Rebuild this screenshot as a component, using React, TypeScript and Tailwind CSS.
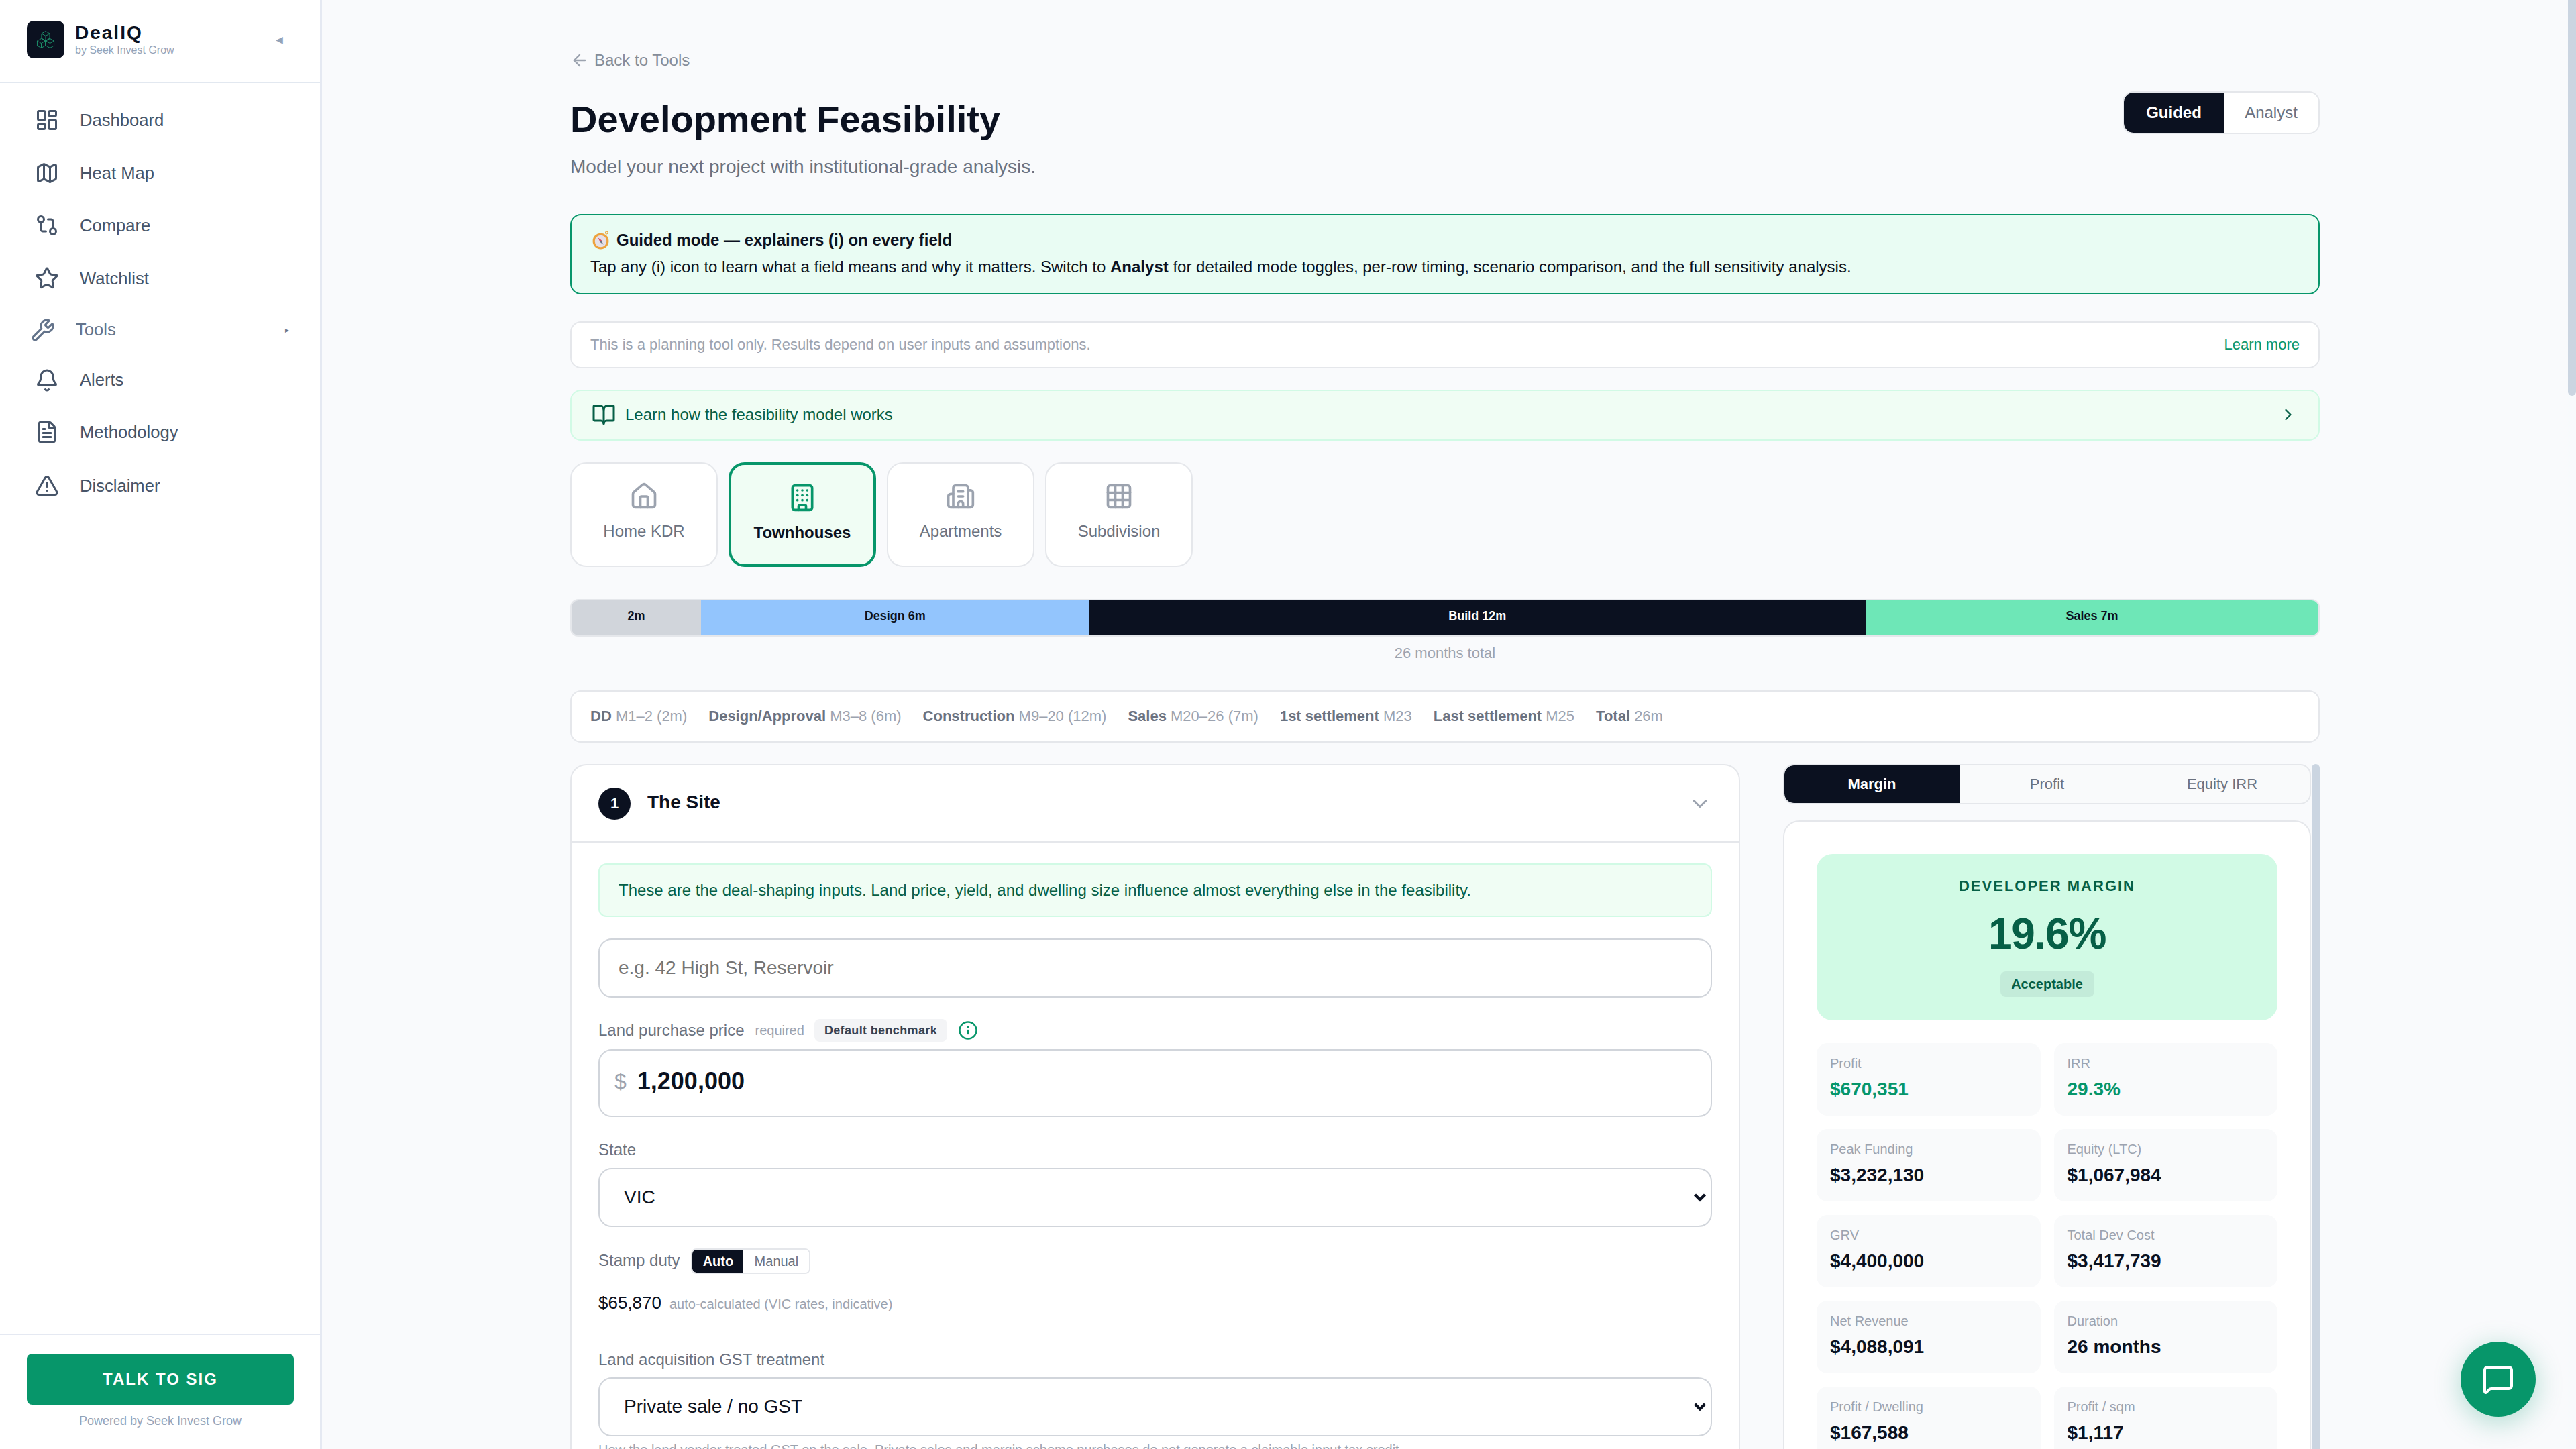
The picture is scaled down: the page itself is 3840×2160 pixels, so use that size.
import React from "react";
import {
  LayoutDashboard, Map as MapIcon, GitCompare, Star, Wrench, Bell, FileText, TriangleAlert,
  ArrowLeft, BookOpen, ChevronRight, ChevronDown, House, Building, Building2, Grid3x3, Info, MessageSquare,
} from "lucide-react";

const navTop = [
  { label: "Dashboard", icon: LayoutDashboard },
  { label: "Heat Map", icon: MapIcon },
  { label: "Compare", icon: GitCompare },
  { label: "Watchlist", icon: Star },
];

function NavRow({ label, icon: Icon, h }: { label: string; icon: any; h: string }) {
  return (
    <div className={`flex items-center pl-[52px] gap-[31px] text-[25.6px] text-[#475569] ${h}`}>
      <Icon size={36} strokeWidth={2} className="shrink-0" />
      <span>{label}</span>
    </div>
  );
}

function Logo() {
  const cube = (cx: number, cy: number) => {
    const r = 7;
    const d = 6.06;
    return (
      <g key={`${cx}-${cy}`}>
        <polygon points={`${cx},${cy - r} ${cx + d},${cy - r / 2} ${cx + d},${cy + r / 2} ${cx},${cy + r} ${cx - d},${cy + r / 2} ${cx - d},${cy - r / 2}`} />
        <polyline points={`${cx - d},${cy - r / 2} ${cx},${cy} ${cx + d},${cy - r / 2}`} />
        <line x1={cx} y1={cy} x2={cx} y2={cy + r} />
      </g>
    );
  };
  return (
    <div className="flex h-[56px] w-[56px] shrink-0 items-center justify-center rounded-[10px] bg-[#0b1120]">
      <svg width="28" height="26" viewBox="0 0 28 26" fill="none" stroke="#1f9d72" strokeWidth="0.9">
        {cube(14, 7.5)}
        {cube(7.5, 18.5)}
        {cube(20.5, 18.5)}
      </svg>
    </div>
  );
}

function Compass() {
  return (
    <svg width="25" height="28" viewBox="0 0 24 27" className="shrink-0">
      <circle cx="20.5" cy="3" r="1.8" fill="none" stroke="#e9a23b" strokeWidth="1" />
      <circle cx="12" cy="15" r="11.5" fill="#eda33f" />
      <circle cx="12" cy="15" r="8.5" fill="#e6e0e8" />
      <polygon points="8,10 13.5,14 11,16" fill="#d9475f" />
      <polygon points="16,20 10.5,16 13,14" fill="#6b7280" />
    </svg>
  );
}

function Sidebar() {
  return (
    <aside className="flex h-full w-[480px] shrink-0 flex-col border-r-[3px] border-[#e5e9f2] bg-white">
      <div className="flex h-[124px] shrink-0 items-center border-b-[2px] border-[#e2e8f0] pb-[4px] pl-[40px] pr-[55px]">
        <Logo />
        <div className="ml-[16px] flex-1">
          <div className="text-[28px] font-bold leading-[30px] tracking-[2px] text-[#0b1120]">DealIQ</div>
          <div className="mt-[1px] text-[16px] leading-[20px] text-[#94a3b8]">by Seek Invest Grow</div>
        </div>
        <span className="text-[14px] leading-none text-[#94a3b8]">◀</span>
      </div>
      <nav className="flex-1 pt-[16px]">
        {navTop.map((n) => (
          <NavRow key={n.label} label={n.label} icon={n.icon} h="h-[78.5px]" />
        ))}
        <div className="flex h-[75px] items-center gap-[31px] pl-[46px] pr-[46px] text-[25.6px] text-[#64748b]">
          <Wrench size={36} strokeWidth={2} className="shrink-0" />
          <span className="flex-1">Tools</span>
          <span className="text-[12px] leading-none">▸</span>
        </div>
        <NavRow label="Alerts" icon={Bell} h="h-[75px]" />
        <NavRow label="Methodology" icon={FileText} h="h-[80px]" />
        <NavRow label="Disclaimer" icon={TriangleAlert} h="h-[80px]" />
      </nav>
      <div className="flex h-[172px] shrink-0 flex-col items-center border-t-[2px] border-[#e5e9f2] pl-[40px] pr-[39px] pt-[28px]">
        <button className="h-[76px] w-full rounded-[8px] bg-[#07966a] text-[24px] font-bold tracking-[2px] text-white">TALK TO SIG</button>
        <div className="mt-[12px] text-[18px] leading-[24px] text-[#94a3b8]">Powered by Seek Invest Grow</div>
      </div>
    </aside>
  );
}

const types = [
  { label: "Home KDR", icon: House },
  { label: "Townhouses", icon: Building, active: true },
  { label: "Apartments", icon: Building2 },
  { label: "Subdivision", icon: Grid3x3 },
];

function TypeCard({ label, icon: Icon, active }: { label: string; icon: any; active?: boolean }) {
  return (
    <div
      className={
        active
          ? "flex h-[156px] w-[220px] flex-col items-center rounded-[24px] border-[4px] border-[#07966a] bg-[#f0fdf4] pt-[27px]"
          : "flex h-[156px] w-[220px] flex-col items-center rounded-[24px] border-[2px] border-[#e5e7eb] bg-white pt-[27px]"
      }
    >
      <Icon size={44} strokeWidth={2} className={active ? "text-[#07966a]" : "text-[#9ca3af]"} />
      <div className={active ? "mt-[14px] text-[24px] font-bold leading-[32px] text-[#0b1120]" : "mt-[14px] text-[24px] leading-[32px] text-[#6b7280]"}>{label}</div>
    </div>
  );
}

const phases = [
  { label: "2m", grow: "grow-[2]", cls: "bg-[#d1d5db] text-[#0b1120]" },
  { label: "Design 6m", grow: "grow-[6]", cls: "bg-[#93c5fd] text-[#0b1120]" },
  { label: "Build 12m", grow: "grow-[12]", cls: "bg-[#0b1120] text-white" },
  { label: "Sales 7m", grow: "grow-[7]", cls: "bg-[#6ee7b7] text-[#0b1120]" },
];

const schedule = [
  ["DD", "M1–2 (2m)"],
  ["Design/Approval", "M3–8 (6m)"],
  ["Construction", "M9–20 (12m)"],
  ["Sales", "M20–26 (7m)"],
  ["1st settlement", "M23"],
  ["Last settlement", "M25"],
  ["Total", "26m"],
];

const stats: { label: string; value: string; green?: boolean }[] = [
  { label: "Profit", value: "$670,351", green: true },
  { label: "IRR", value: "29.3%", green: true },
  { label: "Peak Funding", value: "$3,232,130" },
  { label: "Equity (LTC)", value: "$1,067,984" },
  { label: "GRV", value: "$4,400,000" },
  { label: "Total Dev Cost", value: "$3,417,739" },
  { label: "Net Revenue", value: "$4,088,091" },
  { label: "Duration", value: "26 months" },
  { label: "Profit / Dwelling", value: "$167,588" },
  { label: "Profit / sqm", value: "$1,117" },
];

function FieldLabel({ children }: { children: React.ReactNode }) {
  return <div className="text-[24px] leading-[32px] text-[#6b7280]">{children}</div>;
}

function SelectField({ value, className }: { value: string; className: string }) {
  return (
    <div className={`relative ${className}`}>
      <select
        defaultValue={value}
        className="block h-[88px] w-full appearance-none rounded-[20px] border-[2px] border-[#d1d5db] bg-white pl-[36px] pr-[48px] text-[28px] text-[#0b1120]"
      >
        <option>{value}</option>
      </select>
      <svg width="18" height="13" viewBox="0 0 18 13" fill="none" stroke="#0b1120" strokeWidth="4.4" className="pointer-events-none absolute right-[9px] top-[38px]">
        <polyline points="1.5,2 9,9.5 16.5,2" />
      </svg>
    </div>
  );
}

function SitePanel() {
  return (
    <section className="h-[1100px] rounded-t-[24px] border-[2px] border-b-0 border-[#e5e7eb] bg-white">
      <div className="flex h-[115px] items-center border-b-[2px] border-[#e5e7eb] pl-[40px] pr-[40px]">
        <div className="flex h-[48px] w-[48px] items-center justify-center rounded-full bg-[#0b1120] text-[22px] font-bold text-white">1</div>
        <div className="ml-[25px] flex-1 pb-[4px] text-[28px] font-bold text-[#0b1120]">The Site</div>
        <ChevronDown size={36} strokeWidth={2} className="text-[#9ca3af]" />
      </div>
      <div className="px-[40px] pt-[31px]">
        <div className="flex h-[80px] items-center rounded-[12px] border-[2px] border-[#d1fae5] bg-[#f0fdf4] pl-[28px] text-[24px] text-[#065f46]">
          These are the deal-shaping inputs. Land price, yield, and dwelling size influence almost everything else in the feasibility.
        </div>
        <input
          readOnly
          placeholder="e.g. 42 High St, Reservoir"
          className="mt-[32px] block h-[88px] w-full rounded-[20px] border-[2px] border-[#d1d5db] bg-white px-[28px] text-[28px] placeholder:text-[#757575]"
        />
        <div className="mt-[32px] flex h-[34px] items-center">
          <span className="text-[24px] text-[#6b7280]">Land purchase price</span>
          <span className="ml-[16px] text-[20px] text-[#9ca3af]">required</span>
          <span className="ml-[15px] flex h-[34px] items-center rounded-[8px] bg-[#f3f4f6] px-[15px] text-[18px] font-bold tracking-[0.36px] text-[#374151]">Default benchmark</span>
          <Info size={30} strokeWidth={2} className="ml-[16px] text-[#07966a]" />
        </div>
        <div className="mt-[11px] flex h-[101px] items-center rounded-[20px] border-[2px] border-[#d1d5db] bg-white pb-[6px] pl-[22px]">
          <span className="text-[32px] text-[#9ca3af]">$</span>
          <span className="ml-[16px] text-[36px] font-bold text-[#0b1120]">1,200,000</span>
        </div>
        <div className="mt-[33px]">
          <FieldLabel>State</FieldLabel>
        </div>
        <SelectField value="VIC" className="mt-[11px]" />
        <div className="mt-[32px] flex h-[38px] items-center">
          <span className="pb-[2px] text-[24px] text-[#6b7280]">Stamp duty</span>
          <div className="ml-[17px] flex h-[38px] overflow-hidden rounded-[8px] border-[2px] border-[#e5e7eb]">
            <span className="flex w-[76px] items-center justify-center rounded-l-[6px] bg-[#0b1120] text-[20px] font-bold text-white">Auto</span>
            <span className="flex w-[98px] items-center justify-center bg-white text-[20px] text-[#6b7280]">Manual</span>
          </div>
        </div>
        <div className="mt-[24px] flex items-baseline">
          <span className="text-[26px] text-[#0b1120]">$65,870</span>
          <span className="ml-[12px] text-[20px] text-[#9ca3af]">auto-calculated (VIC rates, indicative)</span>
        </div>
        <div className="mt-[49px]">
          <FieldLabel>Land acquisition GST treatment</FieldLabel>
        </div>
        <SelectField value="Private sale / no GST" className="mt-[10px]" />
        <div className="mt-[6px] text-[20px] leading-[28px] text-[#9ca3af]">
          How the land vendor treated GST on the sale. Private sales and margin scheme purchases do not generate a claimable input tax credit.
        </div>
      </div>
    </section>
  );
}

function ResultsPanel() {
  return (
    <aside className="flex w-[800px] shrink-0 gap-[1px]">
      <div className="min-w-0 flex-1">
        <div className="flex h-[60px] overflow-hidden rounded-[16px] border-[2px] border-[#e5e7eb] bg-[#f9fafb] pb-0 text-[22px]">
          <div className="flex flex-1 items-center justify-center rounded-l-[14px] bg-[#0b1120] pb-[2px] font-bold text-white">Margin</div>
          <div className="flex flex-1 items-center justify-center pb-[2px] text-[#6b7280]">Profit</div>
          <div className="flex flex-1 items-center justify-center pb-[2px] text-[#6b7280]">Equity IRR</div>
        </div>
        <div className="mt-[24px] rounded-t-[24px] border-[2px] border-b-0 border-[#e5e7eb] bg-white px-[48px] pt-[48px]">
          <div className="flex h-[248px] flex-col items-center rounded-[24px] bg-[#d1fae5] pt-[34px]">
            <div className="text-[22px] font-bold leading-[28px] tracking-[2px] text-[#065f46]">DEVELOPER MARGIN</div>
            <div className="mt-[20px] text-[64px] font-bold leading-[74px] tracking-[-1.28px] text-[#065f46]">19.6%</div>
            <div className="mt-[19px] flex h-[38px] w-[140px] items-center justify-center rounded-[8px] bg-[#c3ebd9] text-[20px] font-bold text-[#065f46]">Acceptable</div>
          </div>
          <div className="mt-[34px] grid grid-cols-2 gap-x-[20px] gap-y-[20px]">
            {stats.map((s) => (
              <div key={s.label} className="h-[108px] rounded-[16px] bg-[#f9fafb] px-[20px] pt-[16px]">
                <div className="text-[20px] leading-[28px] text-[#9ca3af]">{s.label}</div>
                <div className={s.green ? "mt-[8px] text-[28px] font-bold leading-[34px] text-[#07966a]" : "mt-[8px] text-[28px] font-bold leading-[34px] text-[#0b1120]"}>{s.value}</div>
              </div>
            ))}
          </div>
        </div>
      </div>
      <div className="h-[1100px] w-[12px] shrink-0 rounded-t-[6px] bg-[#cbd5e1]" />
    </aside>
  );
}

function Main() {
  return (
    <div className="flex h-full min-w-0 flex-1 overflow-hidden bg-[#f9fafc]">
      <main className="h-full min-w-0 flex-1 overflow-hidden">
        <div className="mx-auto max-w-[2800px] px-[96px] pt-[72px]">
          <div className="flex h-[36px] items-center gap-[8px] text-[24px] text-[#858c98]">
            <ArrowLeft size={28} strokeWidth={2} className="text-[#9ca3af]" />
            <span>Back to Tools</span>
          </div>
          <div className="mt-[28px] flex items-start justify-between">
            <div className="pt-[8px]">
              <h1 className="text-[56px] font-bold leading-[67px] text-[#0b1120]">Development Feasibility</h1>
              <p className="mt-[17px] text-[28px] leading-[42px] text-[#6b7280]">Model your next project with institutional-grade analysis.</p>
            </div>
            <div className="flex h-[64px] overflow-hidden rounded-[16px] border-[2px] border-[#e5e7eb] bg-white text-[24px]">
              <div className="flex w-[149px] items-center justify-center rounded-l-[14px] bg-[#0b1120] font-bold text-white">Guided</div>
              <div className="flex w-[141px] items-center justify-center text-[#6b7280]">Analyst</div>
            </div>
          </div>

          <div className="mt-[49px] h-[120px] rounded-[16px] border-[2px] border-[#07966a] bg-[#e9fcf3] px-[28px] pt-[19px] text-[24px] leading-[36px] text-[#0b1120]">
            <div className="flex items-center font-bold">
              <span className="ml-[3px] mr-[11px] flex">
                <Compass />
              </span>
              <span>Guided mode — explainers (i) on every field</span>
            </div>
            <div className="mt-[4px]">
              Tap any (i) icon to learn what a field means and why it matters. Switch to <b>Analyst</b> for detailed mode toggles, per-row timing, scenario comparison, and the full sensitivity analysis.
            </div>
          </div>

          <div className="mt-[40px] flex h-[70px] items-center justify-between rounded-[16px] border-[2px] border-[#e5e7eb] bg-white px-[28px] pb-[2px] text-[22px]">
            <span className="text-[#9ca3af]">This is a planning tool only. Results depend on user inputs and assumptions.</span>
            <span className="text-[#07966a]">Learn more</span>
          </div>

          <div className="mt-[32px] flex h-[76px] items-center rounded-[16px] border-[2px] border-[#d1fae5] bg-[#f0fdf4] pb-[2px] pl-[30px] pr-[31px] text-[24px] text-[#065f46]">
            <BookOpen size={36} strokeWidth={2} className="shrink-0" />
            <span className="ml-[14px] flex-1">Learn how the feasibility model works</span>
            <ChevronRight size={28} strokeWidth={2} />
          </div>

          <div className="mt-[32px] flex gap-[16px]">
            {types.map((t) => (
              <TypeCard key={t.label} {...t} />
            ))}
          </div>

          <div className="mt-[48px] flex h-[56px] overflow-hidden rounded-[12px] border-[2px] border-[#e5e7eb]">
            {phases.map((p) => (
              <div key={p.label} className={`flex basis-0 items-center justify-center pb-[5px] text-[18px] font-bold ${p.grow} ${p.cls}`}>{p.label}</div>
            ))}
          </div>
          <div className="mt-[9px] text-center text-[22px] leading-[32px] text-[#9ca3af]">26 months total</div>

          <div className="mt-[39px] flex h-[78px] items-center gap-[32px] rounded-[16px] border-[2px] border-[#e5e7eb] bg-white px-[28px] pb-[2px] text-[22px]">
            {schedule.map(([a, b]) => (
              <span key={a}>
                <b className="text-[#6b7280]">{a}</b> <span className="text-[#9ca3af]">{b}</span>
              </span>
            ))}
          </div>

          <div className="mt-[32px] flex items-start gap-[64px]">
            <div className="min-w-0 flex-1">
              <SitePanel />
            </div>
            <ResultsPanel />
          </div>
        </div>
      </main>
      <div className="h-full w-[12px] shrink-0 bg-[#f8fafc]">
        <div className="h-[590px] rounded-b-[6px] bg-[#cbd5e1]" />
      </div>
    </div>
  );
}

export default function App() {
  return (
    <div className="relative flex h-screen w-full overflow-hidden [font-family:'Liberation_Sans',Arial,sans-serif]">
      <Sidebar />
      <Main />
      <button className="absolute bottom-[48px] right-[60px] flex h-[112px] w-[112px] items-center justify-center rounded-full bg-[#07966a] text-white shadow-[0_8px_40px_rgba(5,150,105,0.3)]">
        <MessageSquare size={48} strokeWidth={2} />
      </button>
    </div>
  );
}
